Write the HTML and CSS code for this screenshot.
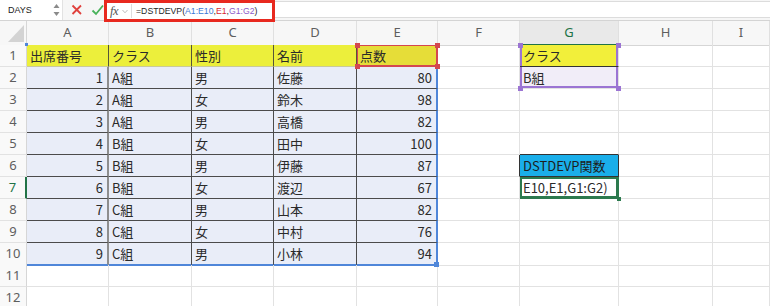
FILE: index.html
```html
<!DOCTYPE html>
<html>
  <head>
    <meta charset="utf-8" />
    <title>DSTDEVP関数</title>
    <link rel="stylesheet" href="styles.css">
  </head>
  <body>
    <!-- Formula bar: name box, cancel / enter, formula -->
    <div class="formula-bar">
      <div class="name-box">
        <span>DAYS</span>
        <svg class="spin" width="7" height="14" viewBox="0 0 7 14">
          <path d="M3.5 1 L6.5 5 L0.5 5 Z" fill="#8a8a8a" />
          <path d="M3.5 13 L6.5 9 L0.5 9 Z" fill="#8a8a8a" />
        </svg>
      </div>
      <svg class="icon cancel" width="20" height="20" viewBox="0 0 20 20">
        <path d="M5.5 5.5 L14 14 M14 5.5 L5.5 14" stroke="#e0403c" stroke-width="1.8" fill="none" />
      </svg>
      <svg class="icon enter" width="16" height="20" viewBox="0 0 16 20">
        <path d="M4.5 10.5 L8 14 L15 5.5" stroke="#48b25a" stroke-width="1.8" fill="none" />
      </svg>
      <div class="formula-box">
        <span class="fx">fx</span>
        <svg class="chev" width="6" height="5" viewBox="0 0 6 5">
          <path d="M0.5 1 L3 3.8 L5.5 1" stroke="#b5b5b5" stroke-width="0.9" fill="none" />
        </svg>
        <span class="formula">=DSTDEVP(<span class="ref-a">A1:E10</span>,<span class="ref-e">E1</span>,<span class="ref-g">G1:G2</span>)</span>
      </div>
      <div class="formula-rest"></div>
    </div>

    <!-- Worksheet -->
    <div class="sheet">
      <div class="row col-head">
        <div class="cell corner">
          <svg width="26" height="23" viewBox="0 0 26 23">
            <path d="M24 4 L24 21 L8 21 Z" fill="#d3d3d3" />
          </svg>
        </div>
        <div class="cell ch">A</div>
        <div class="cell ch">B</div>
        <div class="cell ch">C</div>
        <div class="cell ch">D</div>
        <div class="cell ch">E</div>
        <div class="cell ch">F</div>
        <div class="cell ch active">G</div>
        <div class="cell ch">H</div>
        <div class="cell ch">I</div>
      </div>

      <div class="row">
        <div class="cell rh">1</div>
        <div class="cell hd anchor">出席番号<span class="hdl dot tl"></span></div>
        <div class="cell hd">クラス</div>
        <div class="cell hd">性別</div>
        <div class="cell hd">名前</div>
        <div class="cell hd crit anchor">点数<span class="hdl red tl"></span><span class="hdl red tr"></span><span class="hdl red bl"></span><span class="hdl red br"></span></div>
        <div class="cell"></div>
        <div class="cell gy anchor">クラス<span class="hdl pur tl"></span><span class="hdl pur tr"></span></div>
        <div class="cell"></div>
        <div class="cell"></div>
      </div>

      <div class="row">
        <div class="cell rh">2</div>
        <div class="cell td num first">1</div>
        <div class="cell td">A組</div>
        <div class="cell td">男</div>
        <div class="cell td">佐藤</div>
        <div class="cell td num last">80</div>
        <div class="cell"></div>
        <div class="cell gp anchor">B組<span class="hdl pur bl"></span><span class="hdl pur br"></span></div>
        <div class="cell"></div>
        <div class="cell"></div>
      </div>

      <div class="row">
        <div class="cell rh">3</div>
        <div class="cell td num first">2</div>
        <div class="cell td">A組</div>
        <div class="cell td">女</div>
        <div class="cell td">鈴木</div>
        <div class="cell td num last">98</div>
        <div class="cell"></div>
        <div class="cell"></div>
        <div class="cell"></div>
        <div class="cell"></div>
      </div>

      <div class="row">
        <div class="cell rh">4</div>
        <div class="cell td num first">3</div>
        <div class="cell td">A組</div>
        <div class="cell td">男</div>
        <div class="cell td">高橋</div>
        <div class="cell td num last">82</div>
        <div class="cell"></div>
        <div class="cell"></div>
        <div class="cell"></div>
        <div class="cell"></div>
      </div>

      <div class="row">
        <div class="cell rh">5</div>
        <div class="cell td num first">4</div>
        <div class="cell td">B組</div>
        <div class="cell td">女</div>
        <div class="cell td">田中</div>
        <div class="cell td num last">100</div>
        <div class="cell"></div>
        <div class="cell g-above"></div>
        <div class="cell"></div>
        <div class="cell"></div>
      </div>

      <div class="row">
        <div class="cell rh">6</div>
        <div class="cell td num first">5</div>
        <div class="cell td">B組</div>
        <div class="cell td">男</div>
        <div class="cell td">伊藤</div>
        <div class="cell td num last">87</div>
        <div class="cell f-blue"></div>
        <div class="cell fn">DSTDEVP関数</div>
        <div class="cell"></div>
        <div class="cell"></div>
      </div>

      <div class="row">
        <div class="cell rh active">7</div>
        <div class="cell td num first">6</div>
        <div class="cell td">B組</div>
        <div class="cell td">女</div>
        <div class="cell td">渡辺</div>
        <div class="cell td num last">67</div>
        <div class="cell"></div>
        <div class="cell result anchor">E10,E1,G1:G2)<span class="hdl grn br"></span></div>
        <div class="cell"></div>
        <div class="cell"></div>
      </div>

      <div class="row">
        <div class="cell rh">8</div>
        <div class="cell td num first">7</div>
        <div class="cell td">C組</div>
        <div class="cell td">男</div>
        <div class="cell td">山本</div>
        <div class="cell td num last">82</div>
        <div class="cell"></div>
        <div class="cell"></div>
        <div class="cell"></div>
        <div class="cell"></div>
      </div>

      <div class="row">
        <div class="cell rh">9</div>
        <div class="cell td num first">8</div>
        <div class="cell td">C組</div>
        <div class="cell td">女</div>
        <div class="cell td">中村</div>
        <div class="cell td num last">76</div>
        <div class="cell"></div>
        <div class="cell"></div>
        <div class="cell"></div>
        <div class="cell"></div>
      </div>

      <div class="row">
        <div class="cell rh">10</div>
        <div class="cell td num first bottom">9</div>
        <div class="cell td bottom">C組</div>
        <div class="cell td bottom">男</div>
        <div class="cell td bottom">小林</div>
        <div class="cell td num last bottom anchor">94<span class="hdl blu br"></span></div>
        <div class="cell"></div>
        <div class="cell"></div>
        <div class="cell"></div>
        <div class="cell"></div>
      </div>

      <div class="row">
        <div class="cell rh">11</div>
        <div class="cell"></div>
        <div class="cell"></div>
        <div class="cell"></div>
        <div class="cell"></div>
        <div class="cell"></div>
        <div class="cell"></div>
        <div class="cell"></div>
        <div class="cell"></div>
        <div class="cell"></div>
      </div>

      <div class="row">
        <div class="cell rh">12</div>
        <div class="cell"></div>
        <div class="cell"></div>
        <div class="cell"></div>
        <div class="cell"></div>
        <div class="cell"></div>
        <div class="cell"></div>
        <div class="cell"></div>
        <div class="cell"></div>
        <div class="cell"></div>
      </div>
    </div>
  </body>
</html>
```

FILE: styles.css
```css
/* Reset and base font */
* {
  box-sizing: border-box;
  margin: 0;
  padding: 0;
}

body {
  font-family: "Noto Sans CJK JP", sans-serif;
  background-color: #ffffff;
  color: #2a2a2a;
  overflow: hidden;
}

/* FORMULA BAR */
.formula-bar {
  display: flex;
  align-items: center;
  height: 21px;
  background-color: #f6f6f6;
  border-bottom: 1px solid #d4d4d4;
}

.name-box {
  display: flex;
  align-items: center;
  justify-content: space-between;
  width: 63px;
  height: 20px;
  padding: 0 2px 0 8px;
  background-color: #ffffff;
  border-right: 1px solid #e2e2e2;
  font-family: "Liberation Sans", sans-serif;
  font-size: 9px;
  color: #222222;
}

.icon {
  flex-shrink: 0;
}

.cancel {
  margin-left: 4px;
}

.enter {
  margin-left: 1px;
}

/* Red annotation box round fx and the formula */
.formula-box {
  position: relative;
  z-index: 2;
  display: flex;
  align-items: center;
  align-self: flex-start;
  width: 171px;
  height: 22px;
  padding-left: 3px;
  border: 3px solid #e8291f;
  background-color: #ffffff;
}

.fx {
  font-family: "Liberation Serif", serif;
  font-style: italic;
  font-size: 12.5px;
  color: #555555;
  letter-spacing: -0.5px;
}

.chev {
  margin: 1px 3px 0 4px;
}

.formula {
  padding-left: 4px;
  border-left: 1px solid #dddddd;
  font-family: "Liberation Sans", sans-serif;
  font-size: 8.7px;
  line-height: 14px;
  color: #1e1e1e;
  white-space: nowrap;
}

.ref-a { color: #3a78d6; }
.ref-e { color: #d8262e; }
.ref-g { color: #8d5ac8; }

.formula-rest {
  flex: 1;
  align-self: flex-start;
  height: 17px;
  margin-top: 1px;
  background-color: #ffffff;
  border-top: 1px solid #dcdcdc;
  border-bottom: 1px solid #dcdcdc;
}

/* SHEET GRID */
.row {
  display: grid;
  grid-template-columns: 27px 82px 83px 82px 83px 81px 82px 99px 94px 1fr;
  height: 22px;
}

.col-head {
  height: 24px;
}

.cell {
  height: 100%;
  padding: 0 3px;
  border-right: 1px solid #e2e2e2;
  border-bottom: 1px solid #e2e2e2;
  font-size: 13px;
  line-height: 21px;
  white-space: nowrap;
  overflow: visible;
}

.anchor {
  position: relative;
}

/* Row and column headers */
.corner {
  padding: 0;
  background-color: #f7f7f7;
  border-color: #d6d6d6;
}

.corner svg {
  display: block;
}

.ch {
  background-color: #f7f7f7;
  border-right-color: #e0e0e0;
  border-bottom-color: #d6d6d6;
  font-family: "Noto Sans", sans-serif;
  font-size: 13px;
  line-height: 23px;
  color: #5e5e5e;
  text-align: center;
}

.ch.active {
  background-color: #e9e9e9;
  color: #217346;
  border-bottom: 2px solid #217346;
}

.rh {
  padding: 0;
  background-color: #f9f9f9;
  border-right-color: #d6d6d6;
  font-family: "Noto Sans", sans-serif;
  font-size: 13px;
  color: #5e5e5e;
  text-align: center;
}

.rh.active {
  color: #217346;
  border-right: 2px solid #217346;
}

/* Database range A1:E10 */
.hd {
  background-color: #ecef3b;
  border-right-color: #55553a;
  border-bottom-color: #c9c99a;
}

.td {
  background-color: #e9edf8;
  border-right-color: #4b4b4b;
  border-bottom-color: #4b4b4b;
}

.num {
  text-align: right;
  padding-right: 4px;
}

.first {
  border-right: 2px solid #8e8e8e;
}

.hd:first-of-type {
  border-right: 2px solid #8e8e8e;
}

.last {
  border-right: 2px solid #4f86d9;
}

.bottom {
  border-bottom: 2px solid #4f86d9;
}

/* Criteria field E1 */
.crit {
  background-color: #e6dd38;
  box-shadow: inset 0 0 0 1px #d4474f;
  border-right-color: #d4474f;
  border-bottom-color: #d4474f;
}

/* Criteria range G1:G2 */
.gy {
  background-color: #f2ef3a;
  border-bottom-color: #333333;
  box-shadow: inset 2px 0 0 #9b74d3, inset -2px 0 0 #9b74d3;
}

.gp {
  background-color: #f1edf8;
  box-shadow: inset 2px 0 0 #9b74d3, inset -2px 0 0 #9b74d3, inset 0 -2px 0 #9b74d3;
}

.g-above {
  border-bottom-color: #333333;
}

.f-blue {
  border-right-color: #333333;
}

.fn {
  background-color: #1aaee9;
  border-right-color: #333333;
  border-bottom-color: #333333;
  color: #1d1d1d;
}

.result {
  padding-left: 3px;
  box-shadow: inset 0 0 0 2px #2c7a4e;
  border-right-color: #2c7a4e;
  border-bottom-color: #2c7a4e;
}

/* Selection handles */
.hdl {
  position: absolute;
  z-index: 5;
  width: 5px;
  height: 5px;
}

.tl { left: -2px; top: -2px; }
.tr { right: -3px; top: -2px; }
.bl { left: -2px; bottom: -3px; }
.br { right: -3px; bottom: -3px; }

.red { background-color: #d4474f; }
.pur { background-color: #9b74d3; }
.grn { background-color: #2c7a4e; width: 4px; height: 4px; }
.blu { background-color: #4f86d9; }

.dot {
  width: 3px;
  height: 3px;
  background-color: #4f86d9;
}
```
